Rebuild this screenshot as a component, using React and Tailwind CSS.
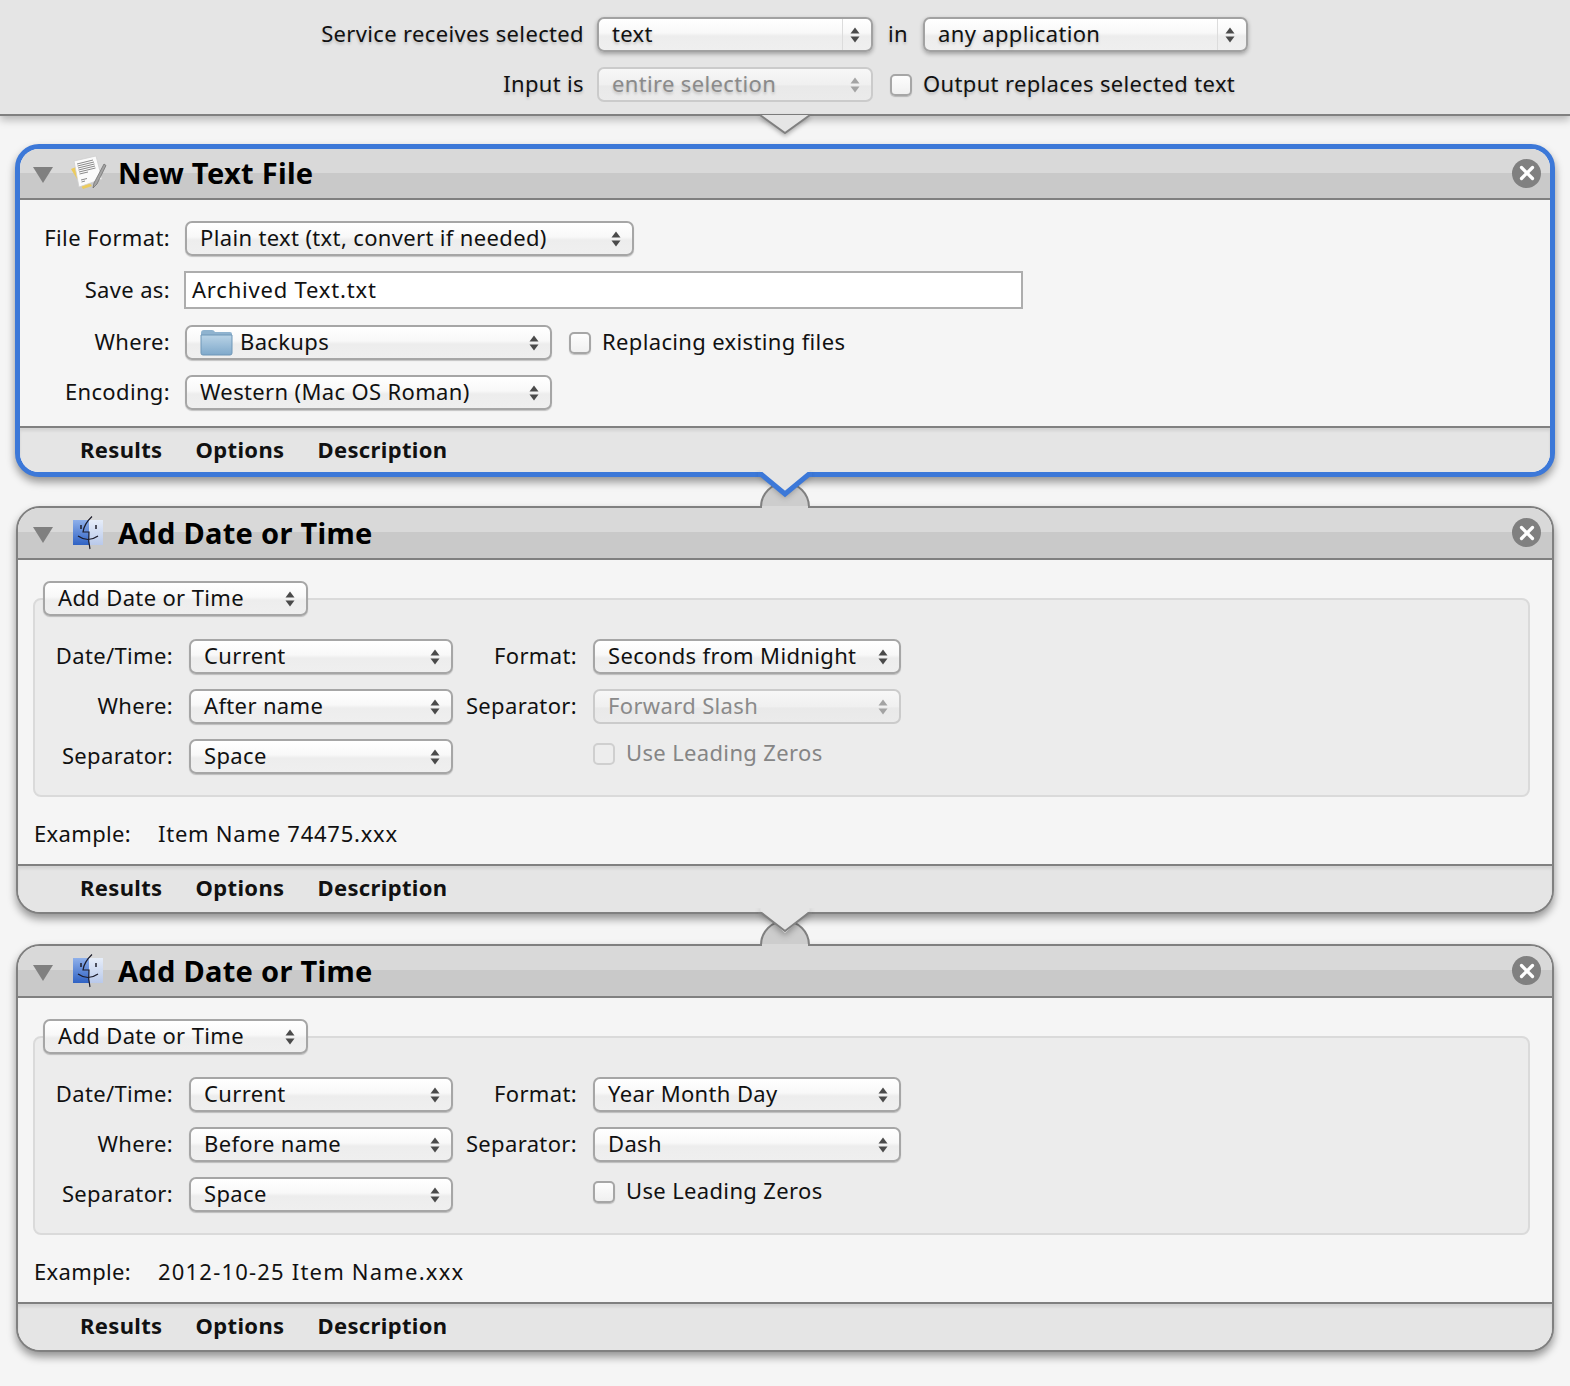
import { X } from "lucide-react";

const font = "font-['Noto_Sans',sans-serif] text-[22px] tracking-[0.35px] leading-none";

function Arrows({ disabled }) {
  const c = disabled ? "#a3a3a3" : "#4a4a4a";
  return (
    <svg width="10" height="16" viewBox="0 0 10 16" className="shrink-0">
      <path d="M5 0.5 L9.5 6.5 H0.5 Z" fill={c} />
      <path d="M5 15.5 L9.5 9.5 H0.5 Z" fill={c} />
    </svg>
  );
}

function FolderIcon() {
  return (
    <svg width="33" height="27" viewBox="0 0 33 27" className="shrink-0 mr-[7px]">
      <defs>
        <linearGradient id="folderFill" x1="0" y1="0" x2="0" y2="1">
          <stop offset="0" stopColor="#b9d3e6" />
          <stop offset="1" stopColor="#7fa9cb" />
        </linearGradient>
      </defs>
      <path d="M1 4 Q1 1 4 1 H12 Q14 1 15 3 H30 Q32 3 32 5 V8 H1 Z" fill="#8fb3cf" />
      <path d="M1 6 H32 V24 Q32 26 30 26 H3 Q1 26 1 24 Z" fill="url(#folderFill)" stroke="#6e97b8" strokeWidth="1" />
    </svg>
  );
}

function NoteIcon() {
  return (
    <svg width="38" height="38" viewBox="0 0 38 38" className="-ml-[2px]">
      <path d="M1 14 L6 12 L22 31 L13 34 Z" fill="#eccb5c" />
      <path d="M4 6 L26 1 L32 24 L9 32 Z" fill="#fbfbfb" stroke="#cfcfcf" strokeWidth="0.8" />
      <path d="M7 9 L23 5 M7.500 11 L24 7 M8 13 L24.500 9 M8.500 15 L25 11 M9 17 L25.500 13 M9.500 19 L18 17 M11 25 L17 23.500 M11.500 27 L15 26" stroke="#8a8a8a" strokeWidth="1" />
      <path d="M34 9 L36 10.500 L27 29 L23 33 L24 28 Z" fill="#a3a3a3" stroke="#6a6a6a" strokeWidth="0.7" />
    </svg>
  );
}

function FinderIcon() {
  return (
    <svg width="32" height="34" viewBox="0 0 32 34">
      <defs>
        <linearGradient id="finderLeft" x1="0" y1="0" x2="0" y2="1">
          <stop offset="0" stopColor="#8fb0ea" />
          <stop offset="1" stopColor="#2f62c4" />
        </linearGradient>
        <linearGradient id="finderRight" x1="0" y1="0" x2="0" y2="1">
          <stop offset="0" stopColor="#e6edf9" />
          <stop offset="1" stopColor="#b9c9ea" />
        </linearGradient>
      </defs>
      <rect x="1" y="4" width="17" height="25" fill="url(#finderLeft)" />
      <rect x="17" y="4" width="14" height="25" fill="url(#finderRight)" />
      <path d="M20 0.500 Q12 8 11 16 H17 Q16 25 18 33" fill="none" stroke="#1c1c2a" strokeWidth="1.2" />
      <path d="M6 20 Q16 27 26 20" fill="none" stroke="#1c1c2a" strokeWidth="1.2" />
      <path d="M9 9 V13 M24 9 V13" stroke="#1c1c2a" strokeWidth="1.500" />
    </svg>
  );
}

function Select({ label, className = "", disabled, segmented, icon }) {
  return (
    <div
      className={`flex items-center h-[35px] rounded-[7px] border-2 pl-[13px] pr-[11px] ${
        segmented ? "relative border-[#a2a2a2] shadow-[0_2px_4px_rgba(0,0,0,0.3)]" : disabled ? "border-[#cbcbcb]" : "border-[#a6a6a6] shadow-[0_1px_1px_rgba(0,0,0,0.2)]"
      } ${
        disabled
          ? "bg-[linear-gradient(#f7f7f7,#f0f0f0_50%,#e9e9e9_55%,#ebebeb)] text-[#8a8a8a]"
          : "bg-[linear-gradient(#ffffff,#f8f8f8_45%,#ededed_55%,#efefef)] text-[#111]"
      } ${className}`}
    >
      {icon}
      <span className="flex-1 whitespace-nowrap pb-[3px]">{label}</span>
      {segmented && <div className="absolute top-0 bottom-0 right-[28px] w-px bg-[#dcdcdc]" />}
      <Arrows disabled={disabled} />
    </div>
  );
}

function Check({ disabled }) {
  return (
    <div
      className={`w-[22px] h-[22px] shrink-0 rounded-[5px] border-2 ${
        disabled ? "border-[#cfcfcf] bg-[#ededed]" : "border-[#a6a6a6] bg-[linear-gradient(#fdfdfd,#f0f0f0)] shadow-[0_1px_1px_rgba(0,0,0,0.2)]"
      }`}
    />
  );
}

function Connector({ stroke, width, footer }) {
  return (
    <svg width="60" height="42" viewBox="0 0 60 42" className="absolute z-10 left-[739px] top-[-36px]">
      <path d="M6 37 A24 24 0 0 1 54 37 Z" fill="#cdcdcd" />
      <path d="M6 37 A24 24 0 0 1 54 37" fill="none" stroke="#808080" strokeWidth="2" />
      <rect x="7" y="36" width="46" height="6" fill="#d9d9d9" />
      <path d="M5.500 0 H54.500 V3 L30 25 L5.500 3 Z" fill={footer} className="drop-shadow-[0_3px_3px_rgba(0,0,0,0.3)]" />
      <path
        d={width > 2 ? "M3 4.500 H6.500 L30 24 L53.500 4.500 H57" : "M3 5 H6.500 L30 23 L53.500 5 H57"}
        fill="none"
        stroke={stroke}
        strokeWidth={width}
      />
    </svg>
  );
}

function Card({ title, icon, active, connector, className = "", children }) {
  return (
    <div className={`relative ${active ? "" : "mx-px"} ${className}`}>
      {connector && <Connector {...connector} footer="#e5e5e5" />}
      <div
        className={`rounded-[24px] overflow-hidden bg-[#f5f5f5] shadow-[0_5px_9px_rgba(0,0,0,0.4)] ${
          active ? "border-[5px] border-[#3c78d8]" : "border-2 border-[#808080]"
        }`}
      >
        <div className={`flex items-center border-b-2 border-[#808080] bg-[linear-gradient(#d9d9d9_48%,#c9c9c9_48%)] ${active ? "h-[51px]" : "h-[52px]"}`}>
          <div className={`w-[39px] ${active ? "ml-[13px]" : "ml-[15px]"}`}>
            <svg width="20" height="16" viewBox="0 0 20 16" className="mt-[3px]">
              <path d="M0 0 H20 L10 16 Z" fill="#808080" />
            </svg>
          </div>
          <div className="w-[46px] flex items-center">{icon}</div>
          <div className="-mt-[2px] font-['Noto_Sans',sans-serif] font-bold text-[29px] leading-none tracking-[0.3px] text-black">{title}</div>
          <div className={`ml-auto w-[29px] h-[29px] -mt-[1px] rounded-full bg-[#808080] flex items-center justify-center ${active ? "mr-[9px]" : "mr-[11px]"}`}>
            <X size={22} strokeWidth={3.5} color="#fff" />
          </div>
        </div>
        {children}
        <div className={`flex items-center gap-[33px] border-t-2 border-[#808080] bg-[#e5e5e5] font-['Noto_Sans',sans-serif] font-bold text-[22px] text-[#111] shadow-[inset_0_3px_3px_rgba(0,0,0,0.08)] ${active ? "h-[46px] pl-[60px]" : "h-[48px] pl-[62px] pb-[2px]"}`}>
          <span className="pb-[2px]">Results</span>
          <span className="pb-[2px]">Options</span>
          <span className="pb-[2px]">Description</span>
        </div>
      </div>
    </div>
  );
}

function Label({ className = "", children }) {
  return <div className={`text-right whitespace-nowrap text-[#111] pb-[3px] ${className}`}>{children}</div>;
}

function DateCard({ connector, className, format, where, separator, sepDisabled, example, exampleClass }) {
  return (
    <Card title="Add Date or Time" icon={<FinderIcon />} connector={connector} className={className}>
      <div className="h-[304px] pt-[38px] pl-[15px] pr-[22px]">
        <div className="relative h-[199px] rounded-[8px] border-2 border-[#dadada] bg-[#ececec] pt-[39px]">
          <div className="absolute left-[8px] top-[-19px] w-[265px]">
            <Select label="Add Date or Time" />
          </div>
          <div className="grid grid-cols-[138px_280px_124px_325px] gap-y-[15px] items-center">
            <Label>Date/Time:</Label>
            <Select label="Current" className="ml-4 w-[264px]" />
            <Label>Format:</Label>
            <Select label={format} className="ml-4 w-[308px]" />
            <Label>Where:</Label>
            <Select label={where} className="ml-4 w-[264px]" />
            <Label>Separator:</Label>
            <Select label={separator} disabled={sepDisabled} className="ml-4 w-[308px]" />
            <Label>Separator:</Label>
            <Select label="Space" className="ml-4 w-[264px]" />
            <div />
            <div className={`ml-4 flex items-center gap-[11px] -mt-[6px] ${sepDisabled ? "text-[#858585]" : "text-[#111]"}`}>
              <Check disabled={sepDisabled} />
              <span className="whitespace-nowrap pb-[3px]">Use Leading Zeros</span>
            </div>
          </div>
        </div>
        <div className="flex items-center h-[67px] pt-[5px] pl-px text-[#111]">
          <span className="w-[124px]">Example:</span>
          <span className={exampleClass}>{example}</span>
        </div>
      </div>
    </Card>
  );
}

export default function App() {
  return (
    <div className={`w-[1570px] h-[1386px] overflow-hidden bg-[#f5f5f5] ${font}`}>
      {/* Workflow input bar */}
      <div className="relative z-20 h-[116px] border-b-2 border-[#808080] bg-[#e5e5e5] shadow-[0_4px_8px_rgba(0,0,0,0.25)] pt-[17px] [text-shadow:0_2px_3px_rgba(0,0,0,0.2)]">
        <div className="flex items-center">
          <div className="w-[584px] text-right text-[#111] pb-[3px]">Service receives selected</div>
          <Select label="text" segmented className="ml-[13px] w-[276px]" />
          <div className="w-[50px] text-center text-[#111] pb-[3px]">in</div>
          <Select label="any application" segmented className="w-[325px]" />
        </div>
        <div className="flex items-center mt-[15px]">
          <div className="w-[584px] text-right text-[#111] pb-[3px]">Input is</div>
          <Select label="entire selection" disabled className="ml-[13px] w-[276px]" />
          <div className="ml-[17px] mr-[11px]">
            <Check />
          </div>
          <div className="text-[#111] pb-[3px]">Output replaces selected text</div>
        </div>
        <svg width="52" height="26" viewBox="0 0 52 26" className="absolute left-[759px] top-[114px] drop-shadow-[0_2px_2px_rgba(0,0,0,0.3)]">
          <path d="M1 1 L26 19 L51 1 Z" fill="#e5e5e5" />
          <path d="M1 1 L26 19 L51 1" fill="none" stroke="#808080" strokeWidth="2" />
        </svg>
      </div>

      <div className="px-[15px] pt-[28px]">
        <Card title="New Text File" icon={<NoteIcon />} active>
          <div className="h-[226px] pt-[21px] text-[#111]">
            <div className="flex items-center">
              <Label className="w-[150px]">File Format:</Label>
              <Select label="Plain text (txt, convert if needed)" className="ml-[15px] w-[449px]" />
            </div>
            <div className="flex items-center mt-[15px]">
              <Label className="w-[150px]">Save as:</Label>
              <div className="ml-[14px] w-[839px] h-[38px] flex items-center border-2 border-[#adadad] bg-white pl-[6px] pb-[2px] tracking-[0.8px]">
                Archived Text.txt
              </div>
            </div>
            <div className="flex items-center mt-[16px]">
              <Label className="w-[150px]">Where:</Label>
              <Select label="Backups" icon={<FolderIcon />} className="ml-[15px] w-[367px]" />
              <div className="ml-[17px] mr-[11px]">
                <Check />
              </div>
              <span className="pb-[3px]">Replacing existing files</span>
            </div>
            <div className="flex items-center mt-[15px]">
              <Label className="w-[150px]">Encoding:</Label>
              <Select label="Western (Mac OS Roman)" className="ml-[15px] w-[367px]" />
            </div>
          </div>
        </Card>

        <DateCard
          className="mt-[29px]"
          connector={{ stroke: "#3c78d8", width: 5 }}
          format="Seconds from Midnight"
          where="After name"
          separator="Forward Slash"
          sepDisabled
          example="Item Name 74475.xxx"
          exampleClass="tracking-[0.75px]"
        />
        <DateCard
          className="mt-[30px]"
          connector={{ stroke: "#808080", width: 2 }}
          format="Year Month Day"
          where="Before name"
          separator="Dash"
          example="2012-10-25 Item Name.xxx"
          exampleClass="tracking-[1.2px]"
        />
      </div>
    </div>
  );
}
